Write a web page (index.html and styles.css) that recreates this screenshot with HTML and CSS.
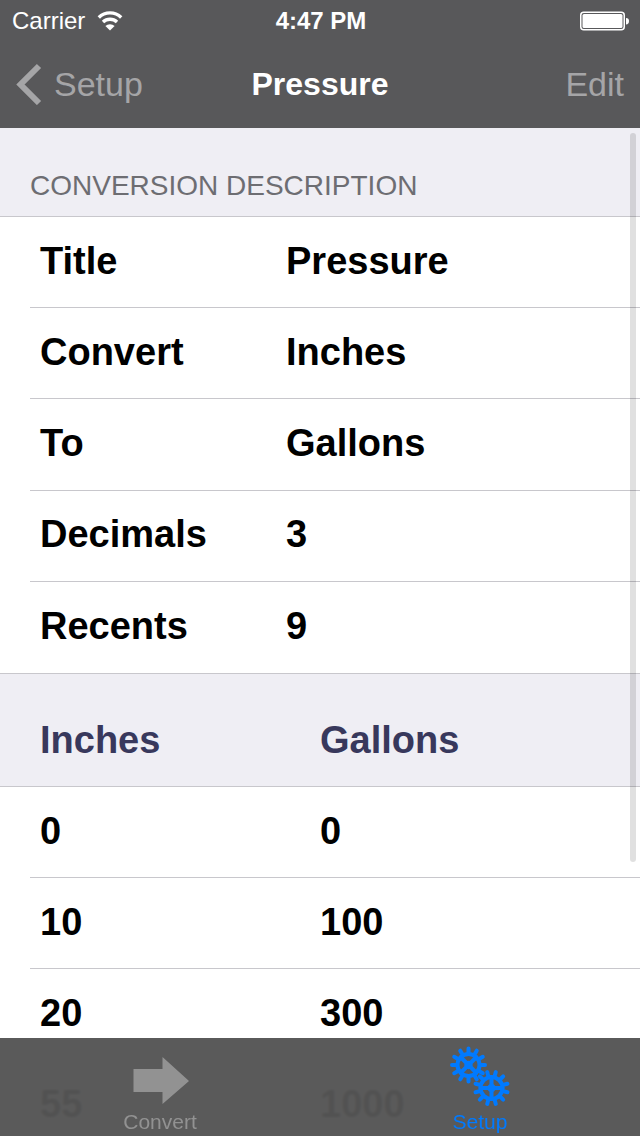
FILE: index.html
```html
<!DOCTYPE html>
<html lang="en">
<head>
<meta charset="utf-8">
<meta name="viewport" content="width=device-width, initial-scale=1">
<title>Pressure</title>
<link rel="stylesheet" href="styles.css">
</head>
<body>
<div class="app">
  <header class="top">
    <div class="status">
      <div class="carrier">
        <span>Carrier</span>
        <svg class="wifi" viewBox="0 0 26 20" aria-hidden="true">
          <path d="M1.8 6.4A16.2 16.2 0 0 1 24.2 6.4" />
          <path d="M6 11A10.2 10.2 0 0 1 20 11" />
          <path class="wifi-dot" d="M13 19.500L8.400 15A6.600 6.600 0 0 1 17.600 15Z" />
        </svg>
      </div>
      <span class="time">4:47 PM</span>
      <svg class="battery" viewBox="0 0 50 20" aria-hidden="true">
        <rect class="battery-case" x="0.75" y="1.25" width="43.5" height="17.5" rx="3" />
        <rect class="battery-fill" x="2.5" y="3" width="40" height="14" rx="1.5" />
        <path class="battery-fill" d="M46 7C48 7 49 8 49 10C49 12 48 13.500 46 13.500Z" />
      </svg>
    </div>
    <nav class="nav">
      <a class="nav-link back" href="#setup">
        <svg class="chevron" viewBox="0 0 26 42" aria-hidden="true"><path d="M23 3L4.500 21.500L23 40" /></svg>
        <span>Setup</span>
      </a>
      <h1 class="nav-title">Pressure</h1>
      <button class="nav-link edit" type="button">Edit</button>
    </nav>
  </header>

  <main class="content">
    <h2 class="section-title">CONVERSION DESCRIPTION</h2>
    <dl class="group details">
      <div class="row"><dt>Title</dt><dd>Pressure</dd></div>
      <div class="row"><dt>Convert</dt><dd>Inches</dd></div>
      <div class="row"><dt>To</dt><dd>Gallons</dd></div>
      <div class="row"><dt>Decimals</dt><dd>3</dd></div>
      <div class="row"><dt>Recents</dt><dd>9</dd></div>
    </dl>
    <table class="values">
      <thead class="values-head">
        <tr class="head-row"><th scope="col">Inches</th><th scope="col">Gallons</th></tr>
      </thead>
      <tbody class="group">
        <tr class="row"><td>0</td><td>0</td></tr>
        <tr class="row"><td>10</td><td>100</td></tr>
        <tr class="row"><td>20</td><td>300</td></tr>
        <tr class="row"><td>55</td><td>1000</td></tr>
      </tbody>
    </table>
    <div class="scroll-thumb"></div>
  </main>

  <nav class="tabs">
    <a class="tab" href="#convert">
      <svg class="tab-icon" viewBox="0 0 64 64" aria-hidden="true">
        <path class="arrow" d="M5.500 23H34.500V11L61 35L34.500 58V46H5.500Z" />
      </svg>
      <span>Convert</span>
    </a>
    <a class="tab active" href="#setup" aria-current="page">
      <svg class="tab-icon" viewBox="0 0 64 64" aria-hidden="true">
        <defs>
          <g id="teeth">
            <path id="tooth" d="M0 -12V-16.500M0 12V16.500" />
            <use href="#tooth" transform="rotate(30)" />
            <use href="#tooth" transform="rotate(60)" />
            <use href="#tooth" transform="rotate(90)" />
            <use href="#tooth" transform="rotate(120)" />
            <use href="#tooth" transform="rotate(150)" />
          </g>
          <g id="gear">
            <circle r="11" />
            <path d="M0 -11V11M-11 0H11" />
            <circle class="hub" r="4" />
          </g>
        </defs>
        <g class="gear" transform="translate(20.500 19)">
          <use href="#teeth" />
          <use href="#gear" transform="rotate(45)" />
        </g>
        <g class="gear" transform="translate(43.500 42)">
          <use href="#teeth" transform="rotate(15)" />
          <use href="#gear" />
        </g>
      </svg>
      <span>Setup</span>
    </a>
  </nav>
</div>
</body>
</html>
```
FILE: styles.css
```css
* {
  box-sizing: border-box;
}

body {
  margin: 0;
  background: #fff;
  color: #000;
  font-family: "Liberation Sans", Arial, sans-serif;
}

.app {
  display: flex;
  flex-direction: column;
  height: 100vh;
  overflow: hidden;
}

/* Status and navigation bars */

.top {
  flex: none;
  background: #58585a;
  color: #fff;
}

.status,
.nav {
  display: grid;
  grid-template-columns: 1fr auto 1fr;
  align-items: center;
}

.status {
  height: 42px;
  padding: 0 10px 0 12px;
  font-size: 24px;
}

.carrier {
  display: flex;
  align-items: center;
  gap: 12px;
}

.wifi {
  width: 26px;
  height: 20px;
  fill: none;
  stroke: #fff;
  stroke-width: 3.4;
}

.wifi-dot {
  fill: #fff;
  stroke: none;
}

.time {
  font-weight: bold;
}

.battery {
  justify-self: end;
  width: 50px;
  height: 20px;
}

.battery-case {
  fill: none;
  stroke: #fff;
  stroke-width: 1.5;
}

.battery-fill {
  fill: #fff;
}

.nav {
  height: 86px;
  padding: 0 16px 2px;
}

.nav-link {
  border: 0;
  padding: 0;
  background: none;
  color: #a5a5a7;
  font: inherit;
  font-size: 34px;
  text-decoration: none;
}

.back {
  display: flex;
  align-items: center;
  gap: 12px;
}

.chevron {
  width: 26px;
  height: 42px;
  fill: none;
  stroke: currentColor;
  stroke-width: 6;
}

.edit {
  justify-self: end;
}

.nav-title {
  margin: 0;
  font-size: 32px;
  font-weight: bold;
}

/* Grouped lists */

.content {
  position: relative;
  flex: none;
  background: #efeef4;
}

.section-title {
  margin: 0;
  padding: 42px 30px 14px;
  border-bottom: 1px solid #c8c7cc;
  color: #6d6d72;
  font-size: 28px;
  font-weight: normal;
  line-height: 32px;
}

.group {
  display: grid;
  grid-auto-rows: 1fr;
  margin: 0;
  padding-left: 30px;
  background: #fff;
  font-size: 38px;
  font-weight: bold;
}

.details {
  min-height: 456px;
}

.row {
  display: grid;
  grid-template-columns: 246px 1fr;
  align-items: center;
  min-height: 91px;
  padding: 0 10px 2px;
  border-bottom: 1px solid #c8c7cc;
}

.details .row:last-child {
  border-bottom: 0;
}

.row dd {
  margin: 0;
}

.values,
.values-head {
  display: block;
}

.values-head {
  border-top: 1px solid #c8c7cc;
  border-bottom: 1px solid #c8c7cc;
  color: #38385c;
  font-size: 38px;
}

.head-row {
  display: grid;
  grid-template-columns: 280px 1fr;
  padding: 44px 40px 24px;
  line-height: 44px;
  text-align: left;
}

.values .row {
  grid-template-columns: 280px 1fr;
}

.values td,
.values th {
  padding: 0;
}

.scroll-thumb {
  position: absolute;
  top: 5px;
  right: 4px;
  width: 6px;
  height: 729px;
  border-radius: 3px;
  background: rgba(0, 0, 0, 0.12);
}

/* Tab bar */

.tabs {
  position: fixed;
  right: 0;
  bottom: 0;
  left: 0;
  display: grid;
  grid-template-columns: 1fr 1fr;
  background: rgba(85, 85, 85, 0.97);
  backdrop-filter: blur(1px);
}

.tab {
  display: flex;
  flex-direction: column;
  align-items: center;
  padding: 8px 0 2px;
  color: #929292;
  font-size: 21px;
  line-height: 24px;
  text-decoration: none;
}

.tab.active {
  color: #007aff;
}

.tab-icon {
  width: 64px;
  height: 64px;
}

.arrow {
  fill: currentColor;
}

.gear {
  fill: none;
  stroke: currentColor;
  stroke-width: 4;
  stroke-linecap: round;
}

.hub {
  fill: currentColor;
  stroke: none;
}
```
